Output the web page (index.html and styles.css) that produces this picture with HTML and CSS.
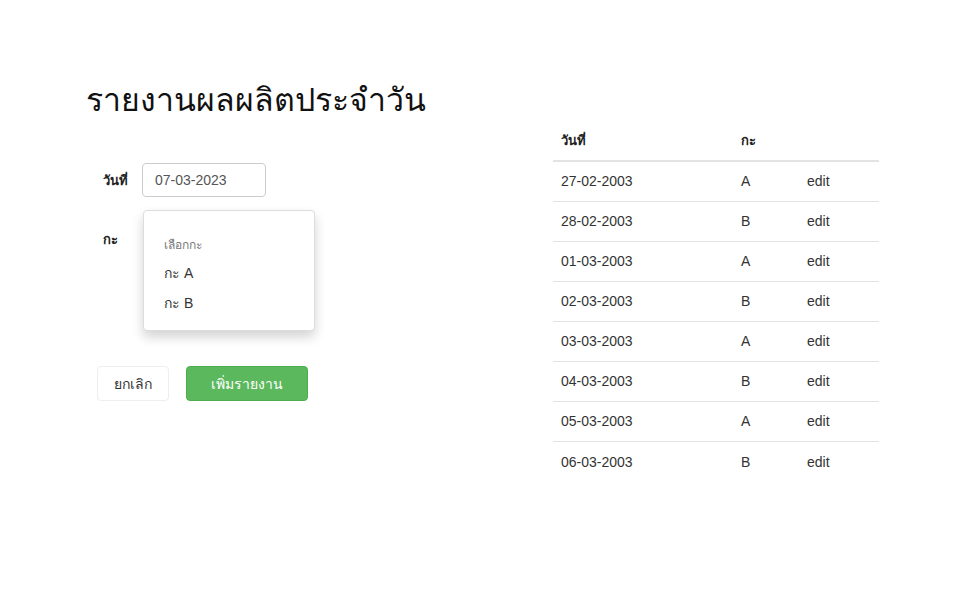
FILE: index.html
```html
<!DOCTYPE html>
<html lang="th">
<head>
<meta charset="utf-8">
<link rel="stylesheet" href="styles.css">
</head>
<body>
<main class="page">
  <section class="left">
    <h1 class="title">รายงานผลผลิตประจำวัน</h1>
    <div class="form">
      <div class="row row-date">
        <label class="label">วันที่</label>
        <div class="input">07-03-2023</div>
      </div>
      <div class="row row-shift">
        <label class="label label-shift">กะ</label>
        <div class="menu">
          <div class="menu-head">เลือกกะ</div>
          <div class="menu-item">กะ A</div>
          <div class="menu-item">กะ B</div>
        </div>
      </div>
      <div class="actions">
        <button class="btn btn-cancel">ยกเลิก</button>
        <button class="btn btn-add">เพิ่มรายงาน</button>
      </div>
    </div>
  </section>
  <section class="right">
    <table class="table">
      <thead>
        <tr><th class="c-date">วันที่</th><th class="c-shift">กะ</th><th class="c-edit"></th></tr>
      </thead>
      <tbody>
        <tr><td>27-02-2003</td><td>A</td><td>edit</td></tr>
        <tr><td>28-02-2003</td><td>B</td><td>edit</td></tr>
        <tr><td>01-03-2003</td><td>A</td><td>edit</td></tr>
        <tr><td>02-03-2003</td><td>B</td><td>edit</td></tr>
        <tr><td>03-03-2003</td><td>A</td><td>edit</td></tr>
        <tr><td>04-03-2003</td><td>B</td><td>edit</td></tr>
        <tr><td>05-03-2003</td><td>A</td><td>edit</td></tr>
        <tr><td>06-03-2003</td><td>B</td><td>edit</td></tr>
      </tbody>
    </table>
  </section>
</main>
</body>
</html>
```
FILE: styles.css
```css
* { box-sizing: border-box; }
html, body { margin: 0; padding: 0; background: #fff; }
body {
  font-family: "Liberation Sans", Arial, "Noto Sans", sans-serif;
  font-size: 14px;
  color: #333;
}
.page {
  display: flex;
  padding: 76px 0 0 86px;
}
.left { width: 467px; }
.title {
  margin: 0;
  font-size: 32px;
  font-weight: 400;
  line-height: 48px;
  color: #111;
}
.form { padding: 39px 0 0 17px; }
.row { display: flex; align-items: center; }
.label {
  width: 39px;
  font-size: 13px;
  font-weight: 700;
  color: #222;
}
.input {
  width: 124px;
  height: 34px;
  border: 1px solid #ccc;
  border-radius: 4px;
  padding: 0 12px;
  display: flex;
  align-items: center;
  color: #555;
}
.row-shift { align-items: flex-start; margin-top: 13px; }
.label-shift { padding-top: 19px; }
.menu {
  width: 172px;
  height: 121px;
  margin-left: 1px;
  border: 1px solid #ddd;
  border-radius: 4px;
  background: #fff;
  box-shadow: 0 6px 12px rgba(0,0,0,0.175);
  padding: 24px 0 0 20px;
}
.menu-head {
  font-size: 12px;
  color: #777;
  line-height: 20px;
}
.menu-item {
  line-height: 30px;
  color: #333;
}
.menu-head + .menu-item { margin-top: 3px; }
.actions {
  display: flex;
  gap: 17px;
  margin: 35px 0 0 -6px;
}
.btn {
  height: 35px;
  border-radius: 4px;
  font-family: inherit;
  font-size: 14px;
  padding: 0 16px;
  cursor: pointer;
}
.btn-cancel {
  width: 72px;
  background: #fff;
  border: 1px solid #eee;
  color: #333;
}
.btn-add {
  width: 122px;
  background: #5cb85c;
  border: 1px solid #4cae4c;
  color: #fff;
}
.right { padding-top: 45px; }
.table {
  width: 326px;
  border-collapse: collapse;
}
.table th, .table td {
  text-align: left;
  padding: 0 8px;
  height: 40px;
  vertical-align: middle;
}
.table th {
  font-size: 13px;
  font-weight: 700;
  color: #222;
  border-bottom: 2px solid #e3e3e3;
}
.table td { border-top: 1px solid #e3e3e3; }
.table tbody tr:first-child td { border-top: 0; }
.table tbody tr:last-child td { padding-top: 2px; }
.c-date { width: 180px; }
.c-shift { width: 66px; }
```
